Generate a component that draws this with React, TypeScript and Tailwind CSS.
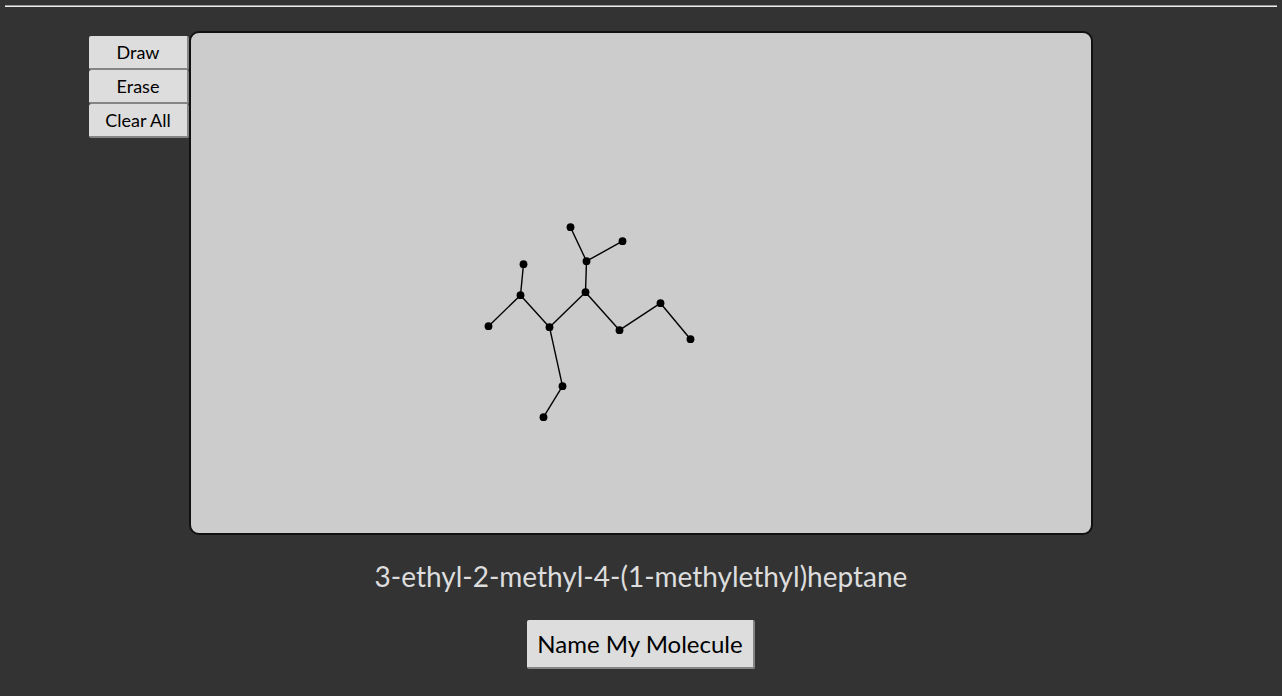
import { useState } from "react";

type Point = [number, number];

const initialAtoms: Point[] = [
  [297, 293],
  [329, 262],
  [332, 231],
  [358, 294],
  [394, 259],
  [395, 228],
  [379, 194],
  [431, 208],
  [428, 297],
  [469, 270],
  [499, 306],
  [371, 353],
  [352, 384],
];

const bonds: [number, number][] = [
  [0, 1],
  [1, 2],
  [1, 3],
  [3, 4],
  [4, 5],
  [5, 6],
  [5, 7],
  [4, 8],
  [8, 9],
  [9, 10],
  [3, 11],
  [11, 12],
];

const buttonStyle =
  "cursor-pointer rounded-xs border-r-2 border-b-2 border-[#858585] bg-[#dddddd] text-black";

export default function App() {
  const [atoms, setAtoms] = useState<Point[]>(initialAtoms);

  return (
    <main className="min-h-screen bg-[#333333] px-[5px] pt-[5px] pb-6 font-['Lato',sans-serif]">
      <hr className="h-[2px] border-0 border-t border-[#9a9a9a] bg-[#eeeeee]" />
      <section className="mt-6 flex items-start">
        <div className="flex flex-1 flex-col items-end pt-[5px]">
          {["Draw", "Erase", "Clear All"].map((label) => (
            <button
              key={label}
              type="button"
              onClick={() => label === "Clear All" && setAtoms([])}
              className={`${buttonStyle} h-[34px] w-[100px] text-lg leading-6`}
            >
              {label}
            </button>
          ))}
        </div>
        <div className="w-full max-w-[904px] overflow-hidden rounded-[10px] border-2 border-[#111111] bg-[#cccccc]">
          <svg viewBox="0 0 900 500" className="block w-full" role="img" aria-label="Molecule">
            {atoms.length > 0 &&
              bonds.map(([a, b]) => (
                <line
                  key={`${a}-${b}`}
                  x1={atoms[a][0] + 0.5}
                  y1={atoms[a][1] + 0.2}
                  x2={atoms[b][0] + 0.5}
                  y2={atoms[b][1] + 0.2}
                  stroke="#000"
                  strokeWidth="1.4"
                />
              ))}
            {atoms.map(([x, y]) => (
              <circle key={`${x}-${y}`} cx={x + 0.5} cy={y + 0.2} r="3.9" />
            ))}
          </svg>
        </div>
        <div className="flex-1" />
      </section>
      <section className="mt-[23px] flex flex-col items-center gap-[26px]">
        <p className="text-[28px] leading-9 text-[#dddddd]">
          3-ethyl-2-methyl-4-(1-methylethyl)heptane
        </p>
        <button type="button" className={`${buttonStyle} h-[49px] px-[10px] text-2xl`}>
          Name My Molecule
        </button>
      </section>
    </main>
  );
}
